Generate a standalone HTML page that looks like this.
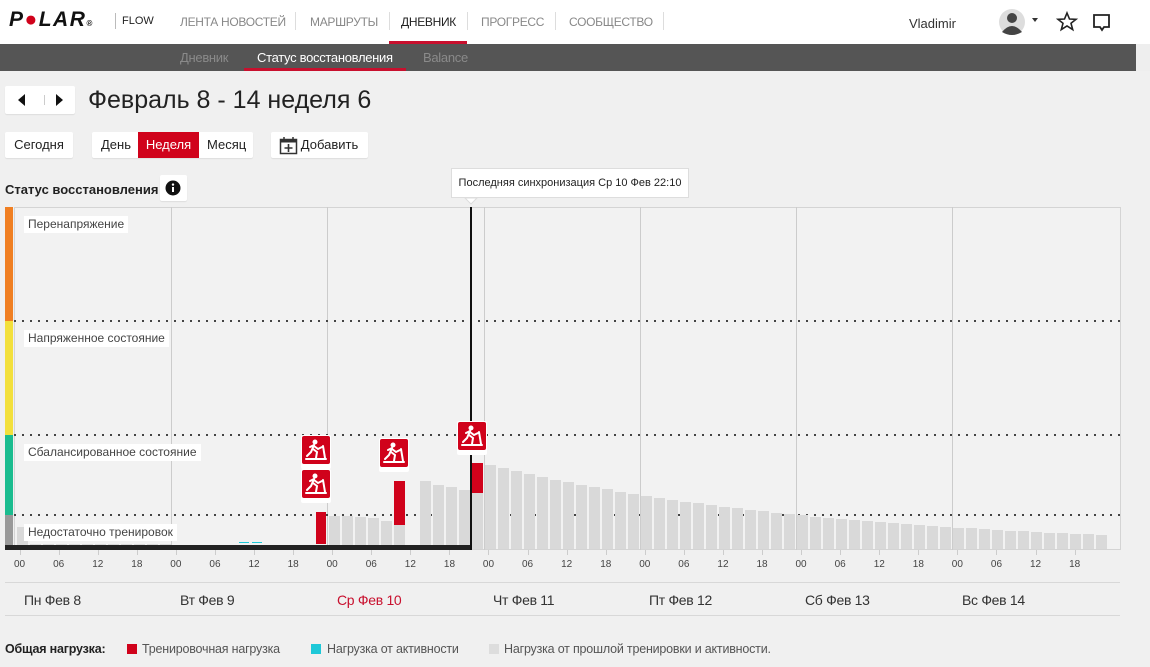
<!DOCTYPE html>
<html><head><meta charset="utf-8"><style>
*{margin:0;padding:0;box-sizing:border-box}
body{width:1150px;height:667px;overflow:hidden;background:#f0f0f0;font-family:"Liberation Sans",sans-serif;color:#222;position:relative}
.abs{position:absolute}
#top{left:0;top:0;width:1150px;height:44px;background:#fff}
.nav{top:15px;font-size:12px;color:#888;letter-spacing:-0.3px}
.sep{top:12px;width:1px;height:18px;background:#ddd}
#sub{left:0;top:44px;width:1136px;height:27px;background:#555}
.sub{top:50px;font-size:13px;color:#8a8a8a;letter-spacing:-0.3px}
.btn{background:#fff;border-radius:2px;font-size:13px;height:26px;line-height:26px;text-align:center;box-shadow:0 1px 1px rgba(0,0,0,.08)}
.lbl{font-size:12px;color:#444;background:#fff;padding:0 4px;height:17px;line-height:17px}
.ax{font-size:10px;color:#444;top:559px}
.day{font-size:14px;top:592px;color:#333;letter-spacing:-0.3px}
.leg{top:642px;font-size:12.5px;color:#555;letter-spacing:-0.2px}
</style></head><body>
<div id="top" class="abs"></div>
<div class="abs" style="left:9px;top:8px;font:italic 900 21px 'Liberation Sans';letter-spacing:1.5px;color:#111">P<span style="color:#d0021b">●</span>LAR<span style="font-size:8px">®</span></div>
<div class="abs" style="left:115px;top:13px;width:1px;height:16px;background:#bbb"></div>
<div class="abs" style="left:122px;top:15px;font-size:11px;color:#222">FLOW</div>
<div class="abs nav" style="left:180px">ЛЕНТА НОВОСТЕЙ</div><div class="abs sep" style="left:295px"></div>
<div class="abs nav" style="left:310px">МАРШРУТЫ</div><div class="abs sep" style="left:389px"></div>
<div class="abs nav" style="left:401px;color:#222">ДНЕВНИК</div><div class="abs sep" style="left:467px"></div>
<div class="abs nav" style="left:481px">ПРОГРЕСС</div><div class="abs sep" style="left:555px"></div>
<div class="abs nav" style="left:569px">СООБЩЕСТВО</div><div class="abs sep" style="left:663px"></div>
<div class="abs" style="left:389px;top:41px;width:78px;height:3px;background:#c8102e"></div>
<div class="abs" style="left:909px;top:16px;font-size:13px;color:#333">Vladimir</div>
<svg class="abs" style="left:998px;top:8px" width="140" height="30">
<circle cx="14" cy="14" r="13" fill="#ddd"/><circle cx="14" cy="10" r="5" fill="#444"/><path d="M4 24 Q14 12 24 24 Q14 30 4 24Z" fill="#444"/>
<path d="M34 10 L40 10 L37 14Z" fill="#333"/>
<path d="M69 5 L71.5 11 L78 11.3 L73 15.3 L74.7 21.6 L69 18 L63.3 21.6 L65 15.3 L60 11.3 L66.5 11Z" fill="none" stroke="#222" stroke-width="1.6"/>
<path d="M96 7 H111 V19 H106 L104 22 L102 19 H96Z" fill="none" stroke="#222" stroke-width="1.8"/>
</svg>
<div id="sub" class="abs"></div>
<div class="abs" style="left:1136px;top:44px;width:14px;height:27px;background:#eee"></div>
<div class="abs sub" style="left:180px">Дневник</div>
<div class="abs sub" style="left:257px;color:#fff">Статус восстановления</div>
<div class="abs sub" style="left:423px">Balance</div>
<div class="abs" style="left:244px;top:68px;width:162px;height:3px;background:#c8102e"></div>

<div class="abs btn" style="left:5px;top:86px;width:70px;height:28px"></div>
<svg class="abs" style="left:5px;top:86px" width="70" height="28"><path d="M20 8 L20 20 L13 14Z M51 8 L51 20 L58 14Z" fill="#111"/><rect x="39" y="9" width="1" height="10" fill="#ccc"/></svg>
<div class="abs" style="left:88px;top:86px;font-size:25px;color:#222">Февраль 8 - 14 неделя 6</div>

<div class="abs btn" style="left:5px;top:132px;width:68px">Сегодня</div>
<div class="abs btn" style="left:92px;top:132px;width:161px"></div>
<div class="abs" style="left:101px;top:132px;font-size:13px;line-height:26px">День</div>
<div class="abs" style="left:138px;top:132px;width:61px;height:26px;background:#d0021b;color:#fff;font-size:13px;line-height:26px;text-align:center">Неделя</div>
<div class="abs" style="left:207px;top:132px;font-size:13px;line-height:26px">Месяц</div>
<div class="abs btn" style="left:271px;top:132px;width:97px;padding-left:20px">Добавить</div>
<svg class="abs" style="left:279px;top:136px" width="20" height="20"><rect x="1.5" y="3.5" width="16" height="14" fill="none" stroke="#333" stroke-width="1.5"/><rect x="1.5" y="3.5" width="16" height="3" fill="#333"/><path d="M5 1 V5 M14 1 V5" stroke="#333" stroke-width="1.5"/><path d="M9.5 8 V16 M5.5 12 H13.5" stroke="#333" stroke-width="1.6"/></svg>

<div class="abs" style="left:5px;top:182px;font-size:13px;font-weight:bold;color:#222">Статус восстановления</div>
<div class="abs btn" style="left:160px;top:175px;width:27px;height:26px"></div>
<svg class="abs" style="left:165px;top:180px" width="16" height="16"><circle cx="8" cy="8" r="7.5" fill="#111"/><rect x="7" y="7" width="2" height="5" fill="#fff"/><circle cx="8" cy="4.6" r="1.2" fill="#fff"/></svg>

<svg id="ch" class="abs" style="left:0;top:160px" width="1150" height="400"></svg>

<div class="abs lbl" style="left:24px;top:216px">Перенапряжение</div>
<div class="abs lbl" style="left:24px;top:330px">Напряженное состояние</div>
<div class="abs lbl" style="left:24px;top:444px">Сбалансированное состояние</div>
<div class="abs lbl" style="left:24px;top:524px">Недостаточно тренировок</div>

<div class="abs" style="left:451px;top:168px;width:238px;height:30px;background:#fff;border:1px solid #ddd;font-size:11px;line-height:28px;text-align:center;color:#222">Последняя синхронизация Ср 10 Фев 22:10</div>

<div id="axis"></div>
<div class="abs" style="left:5px;top:582px;width:1115px;height:1px;background:#d8d8d8"></div>
<div class="abs" style="left:5px;top:615px;width:1115px;height:1px;background:#d8d8d8"></div>
<div class="abs day" style="left:24px">Пн Фев 8</div>
<div class="abs day" style="left:180px">Вт Фев 9</div>
<div class="abs day" style="left:337px;color:#c8102e">Ср Фев 10</div>
<div class="abs day" style="left:493px">Чт Фев 11</div>
<div class="abs day" style="left:649px">Пт Фев 12</div>
<div class="abs day" style="left:805px">Сб Фев 13</div>
<div class="abs day" style="left:962px">Вс Фев 14</div>

<div class="abs leg" style="left:5px;font-weight:bold;color:#222">Общая нагрузка:</div>
<div class="abs" style="left:127px;top:644px;width:10px;height:10px;background:#d0021b"></div>
<div class="abs leg" style="left:142px">Тренировочная нагрузка</div>
<div class="abs" style="left:311px;top:644px;width:10px;height:10px;background:#1ec8d8"></div>
<div class="abs leg" style="left:327px">Нагрузка от активности</div>
<div class="abs" style="left:489px;top:644px;width:10px;height:10px;background:#ddd"></div>
<div class="abs leg" style="left:504px">Нагрузка от прошлой тренировки и активности.</div>

<script>
var s='',Y=-160;
function r(x,y,w,h,c){s+='<rect x="'+x+'" y="'+(y+Y)+'" width="'+w+'" height="'+h+'" fill="'+c+'"/>';}
r(14,207,1106,343,'#f2f2f2');
s+='<rect x="14.5" y="47.5" width="1106" height="342" fill="none" stroke="#d4d4d4"/>';
[171,327,484,640,796,952].forEach(function(x){r(x,207,1,343,'#ccc')});
r(5,207,8,114,'#f07f22');r(5,321,8,114,'#f3e03c');r(5,435,8,80,'#1bbc8f');r(5,515,8,35,'#999');
[321,435,515].forEach(function(y){s+='<line x1="14" y1="'+(y+Y)+'" x2="1120" y2="'+(y+Y)+'" stroke="#444" stroke-width="2" stroke-dasharray="2,6"/>';});
function gb(x,top){r(x,top,11,549-top,'#d9d9d9');}
gb(17,527);
for(var x=30;x<316;x+=13){gb(x,x<170?544:545);}
r(239,542,10,1,'#1ec8d8');r(252,542,10,1,'#1ec8d8');
r(316,512,10,32,'#d0021b');
var wt=[516,516,517,518,521,522,0,481,485,487,490,493];
for(var i=0;i<12;i++){var x=329+i*13; if(wt[i])gb(x,wt[i]);}
gb(394,525);r(394,481,11,44,'#d0021b');
gb(472,493);r(472,463,11,30,'#d0021b');
for(var i=0;i<48;i++){var h=84*Math.exp(-0.0381*i);gb(485+i*13,Math.round(549-h));}
r(5,545,466,5,'#222');r(470,207,2,343,'#111');
function ic(x,y){s+='<g transform="translate('+x+','+(y+Y)+')"><rect x="-1" y="-1" width="30" height="34" rx="2" fill="#fff"/><rect width="28" height="28" rx="2" fill="#d0021b"/><circle cx="13" cy="6" r="2.5" fill="#fff"/><path d="M12 9 L9 16 L5 20 M11 13 L15 16 L14 22 M12 10 L16 13 L20 11 M8 11 L12 9 M21 10 L23 22 M4 23 H24" stroke="#fff" stroke-width="2" fill="none" stroke-linecap="round"/></g>';}
ic(302,436);ic(302,470);ic(380,439);ic(458,422);
s+='<path d="M465 '+(198+Y)+' L471 '+(204+Y)+' L477 '+(198+Y)+'Z" fill="#fff" stroke="#ddd"/>';
document.getElementById('ch').innerHTML=s;
var a='',L=['00','06','12','18'];
for(var d=0;d<7;d++)for(var k=0;k<4;k++){var x=14+d*156.3+k*39.1+6;a+='<div class="abs" style="left:'+(x-0.5)+'px;top:550px;width:1px;height:5px;background:#ccc"></div><div class="abs ax" style="left:'+(x-6)+'px">'+L[k]+'</div>';}
document.getElementById('axis').innerHTML=a;
</script>
</body></html>
